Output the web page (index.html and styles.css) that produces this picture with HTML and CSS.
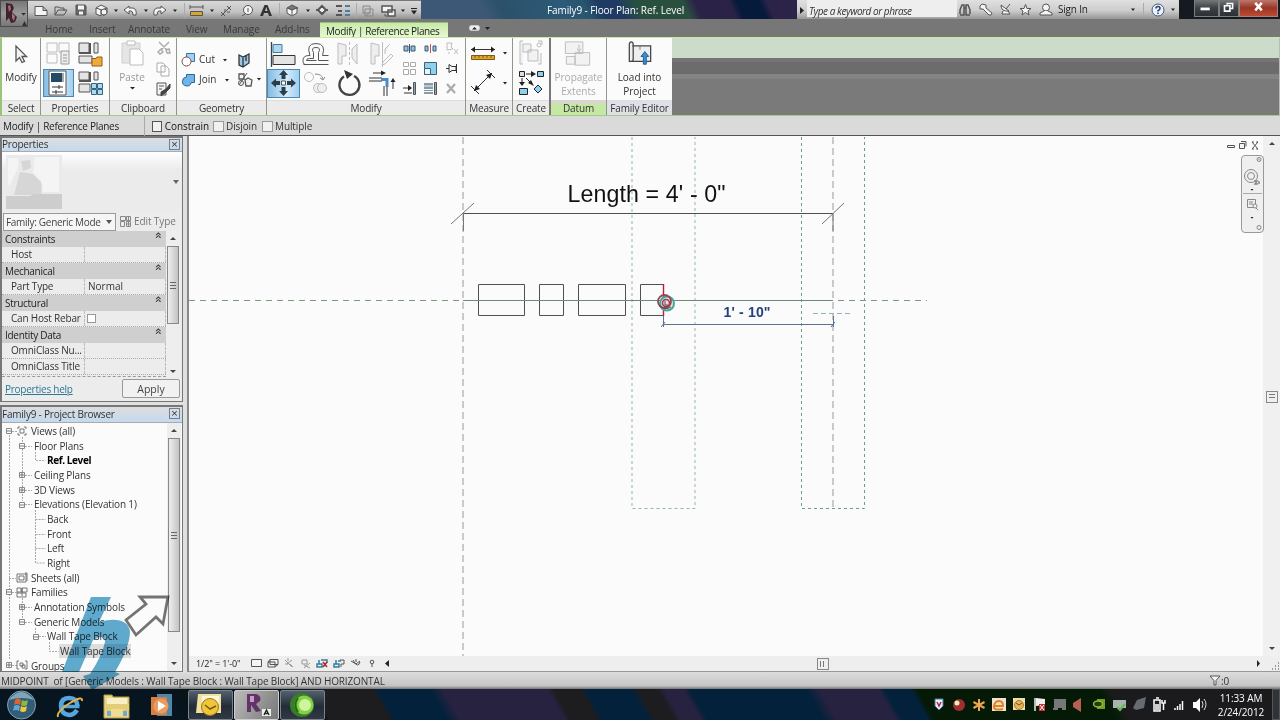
FILE: index.html
```html
<!DOCTYPE html>
<html lang="en">
<head>
    <meta charset="UTF-8">
    <title>Family9 - Floor Plan: Ref. Level</title>
    <link rel="stylesheet" href="styles.css">
</head>
<body>
<div class="top">
    <div class="app-btn">
        <svg width="27" height="27" viewBox="0 0 27 27">
            <path class="nl" fill="#40222a" d="M5 2l6 1 2 4-2 4 5 5-2 5-4 1-2-5-3 3z"/>
            <path class="nl" fill="#a3727f" d="M7 5l2-1 1 4-2 3zM11 12l3 3-1 5-2-3z"/>
            <path class="nl" fill="#333" d="M20 12h5l-2.500 2.500zM21 25l2.500-5 2.500 5z"/>
        </svg>
    </div>
    <div class="top-main">
        <div class="titlebar">
            <div class="qat">
                <svg width="393" height="19" viewBox="28 0 393 19">
                    <path class="w" d="M35 5.500h8l4 4v5H35zM43 5.500v4h4"/>
                    <path d="M55 14V6h4l1 1h4v3M55 14l3-5h9l-3 5z"/>
                    <path fill="#666" d="M76 4h9l1 1v9H76z"/><path class="w nl" d="M78 4.500h6v4h-6zM79 10.500h4v3h-4z"/>
                    <path class="w" d="M96 7l5-3 6 3-5 2zM96 7v6l5 2V9M107 7v5l-4 3"/><circle class="w" cx="104" cy="11" r="3"/>
                    <path class="dn nl" d="M114 8.500h4l-2 2.500zM144 8.500h4l-2 2.500zM173 8.500h4l-2 2.500zM210 8.500h4l-2 2.500zM306 8.500h4l-2 2.500zM401 8.500h4l-2 2.500zM411 7h6v1h-6zM411 9.500h6l-3 4z"/>
                    <path class="w" d="M124 9l5-4v2h4q4 1 3 7h-3q0-4-2-4h-2v3zM166 9l-5-4v2h-4q-4 1-3 7h3q0-4 2-4h2v3z"/>
                    <path class="lt" d="M184.500 2v15M279.500 2v15M356.500 2v15"/>
                    <path d="M190 6h13M190 4v4M203 4v4"/><path fill="#dba62e" d="M190.500 10.500h12v4h-12z"/>
                    <path d="M221 15l10-10M221 11l4 4M227 5l4 4M225 11v-3M227 11h3"/>
                    <circle class="w" cx="248" cy="9" r="4.500"/><path d="M242 15l3-2M248 7v4"/>
                    <path class="nl" fill="#333" d="M260 15l4.500-11h3l4.500 11h-3l-1-3h-4l-1 3zM265 10h2.500l-1.200-4z"/>
                    <path fill="#777" d="M287 7l5-3 6 3-5 2z"/><path class="w" d="M287 7l5 2 5-2v5l-5 3-5-3zM292 9v5"/>
                    <path class="w" stroke-width="2" d="M322 5l4 4-4 4-4-4zM316 9h2M326 9h2"/>
                    <path stroke-width="2" d="M336 5h6M338 10h4M336 14h6"/><path class="b" stroke-width="2" d="M345 5h5M345 10h5M345 14h5"/>
                    <path d="M363 5h7v7h-7zM365 8h8v7h-8zM366 15l5-5" stroke="#888"/>
                    <path class="w" stroke-width="1.500" d="M382 5h10v6h-10zM388 9h7v6h-7z"/><path d="M385 13v2h2"/>
                </svg>
            </div>
            <div class="caption"><span>Family9 - Floor Plan: Ref. Level</span></div>
            <div class="info">
                <svg width="10" height="19" viewBox="0 0 10 19"><path class="nl dn" d="M3 7l4 3.500-4 3.500z"/></svg>
                <div class="search">Type a keyword or phrase</div>
                <svg width="101" height="19" viewBox="957 0 101 19">
                    <path stroke-width="1.500" d="M960 14V10l2-5h2v10h-4M970 14v-4l-2-5h-2v10h4M964 8h2"/>
                    <path class="w" d="M980 6l2-2 4 1v3l6 5-1 2h-2l-6-6h-3z"/>
                    <path class="w" d="M1001 5q0 7 8 6zM1006 9l4-5M1003 11l-1 3h8l-2-3"/>
                    <path class="w" d="M1025.500 4.500l1.500 4h4l-3 2.500 1 4-3.500-2.500-3.500 2.500 1-4-3-2.500h4z"/>
                    <circle class="w" cx="1046" cy="7.500" r="3.500"/><path class="w" d="M1044 11l-4 2v2h12v-2l-4-2"/>
                </svg>
                <span class="sign">Sign In</span>
                <svg class="help" width="54" height="19" viewBox="1125 0 54 19">
                    <path class="lt" d="M1143.500 3v13"/>
                    <circle fill="#edf2f8" stroke="#415a80" cx="1158" cy="10" r="6"/><path stroke="#27466f" stroke-width="1.600" d="M1156 8.500q0-2 2-2t2 1.700q0 1.500-2 2.500v.7M1158 12.500v1.500"/>
                    <path class="nl dn" d="M1131 8.500h4l-2 2.500zM1171 8.500h4l-2 2.500z"/>
                </svg>
            </div>
            <div class="winbtns">
                <svg class="min" width="25" height="17" viewBox="0 0 25 17"><path stroke="#fff" stroke-width="3" d="M6 9.500h10"/></svg>
                <svg class="max" width="20" height="17" viewBox="0 0 20 17"><path stroke="#fff" stroke-width="1.800" d="M5 6h6v6H5zM8 5V3.500h6V9h-2"/></svg>
                <svg class="close" width="39" height="17" viewBox="0 0 39 17"><path stroke="#fff" stroke-width="2.600" d="M16 3l7 8M23 3l-7 8"/></svg>
            </div>
        </div>
        <div class="tabs">
            <span class="t1">Home</span><span class="t2">Insert</span><span class="t3">Annotate</span><span class="t4">View</span><span class="t5">Manage</span><span class="t6">Add-Ins</span>
            <span class="active">Modify | Reference Planes</span>
            <svg width="24" height="18" viewBox="0 0 24 18"><rect x=".5" y="6.500" width="10" height="5" rx="2" fill="#eee" stroke="#ccc"/><path class="nl dn" d="M3 10.500l2.500-2.500 2.500 2.500zM16 8h5l-2.500 3z"/></svg>
        </div>
    </div>
</div>

<div class="ribbon">
    <div class="panel select">
        <div class="tools">
            <svg width="38" height="32" viewBox="0 0 38 32"><path class="w" stroke-width="1.300" d="M14 8v15l3.500-3.500 2.500 5 2.500-1-2.500-5h4.500z"/></svg>
            <span>Modify</span>
        </div>
        <div class="name">Select</div>
    </div>
    <div class="panel props">
        <div class="tools grid2">
            <svg class="dis" width="31" height="28" viewBox="0 0 31 28"><path d="M4 3h10v9H4zM16 3h10v9H16zM4 14h10v9H4z"/><path fill="#eee" stroke="#999" d="M18 11h8v13h-8zM20 15h4M20 18h4M20 21h4"/></svg>
            <svg width="31" height="28" viewBox="0 0 31 28"><path fill="#e4e4e4" d="M5 3h10v10H5zM5 16h13v7H5zM20 3h4v10h-4z"/><path stroke-width="2" d="M16 3v10H5"/><path fill="#f0a93b" stroke="#936014" d="M18 18.500h4l1-1.500h5v9H18z"/></svg>
            <svg class="on" width="31" height="28" viewBox="0 0 31 28"><path fill="#fff" d="M6 2h17v24H6z"/><path class="nl" fill="#254a68" d="M8 4h11v9H8z"/><path fill="#999" d="M20 4v9"/><path stroke="#333" d="M9 18h11M9 23h11M16 16v4M13 21v4"/></svg>
            <svg width="31" height="28" viewBox="0 0 31 28"><path fill="#e4e4e4" d="M5 3h10v8H5zM5 15h11v8H5zM20 3h4v8h-4z"/><path stroke-width="2" d="M16 3v9H5"/><path fill="#a9dcf4" stroke="#39627c" d="M17.500 14.500h5v5h-5zM23.500 14.500h5v5h-5zM17.500 20.500h5v5h-5zM23.500 20.500h5v5h-5z"/></svg>
        </div>
        <div class="name">Properties</div>
    </div>
    <div class="panel clip">
        <div class="tools row">
            <div class="col paste">
                <svg class="dis" width="44" height="32" viewBox="0 0 44 32"><path fill="#ddd" d="M12 5h18v20H12z"/><path fill="#fff" d="M17 3h8v4h-8zM20 11h9l4 4v12H20z"/></svg>
                <span>Paste</span>
                <svg width="44" height="12" viewBox="0 0 44 12"><path class="dn nl" d="M20 3h5l-2.500 2.500z"/></svg>
            </div>
            <svg width="21" height="60" viewBox="0 0 21 60">
                <path class="lt" stroke-width="1.400" d="M5 4l8 8M15 4L7 12M4 14l3-3 2 3-3 2zM12 12l3-1 1 4h-3z"/>
                <path class="lt" fill="#fff" d="M3 25h6l2 2v7H3zM7 28h5l3 3v7H7z"/>
                <path class="w" d="M3 45h9v12H3zM5 48h5M5 51h3"/><path fill="#444" stroke="#444" d="M7 54l5-3 4-5v4l-5 5-4 3z"/>
            </svg>
        </div>
        <div class="name">Clipboard</div>
    </div>
    <div class="panel geo">
        <div class="tools">
            <svg width="17" height="16" viewBox="0 0 17 16"><path fill="#9fd0f5" stroke="#3d75a8" d="M5.500 1.500h8v8h-8z"/><circle fill="#fff" stroke="#844" cx="5.500" cy="9.500" r="4.500"/></svg>
            <span>Cut</span>
            <svg width="16" height="16" viewBox="0 0 16 16"><path class="dn nl" d="M2 7h4l-2 2.500z"/></svg>
            <svg width="32" height="18" viewBox="0 0 32 18"><path fill="#9cc8e8" stroke="#333" stroke-width="1.300" d="M2 4l4 2 6-3v9l-6 4-4-2zM6 6v10M9 5v5"/></svg>
            <svg width="17" height="16" viewBox="0 0 17 16"><path fill="#72b3e8" stroke="#2b6696" d="M5.500 2.500h8v8h-3.200a4.500 4.500 0 1 1-4.800-5.500z"/></svg>
            <span>Join</span>
            <svg width="16" height="16" viewBox="0 0 16 16"><path class="dn nl" d="M4 7h4l-2 2.500z"/></svg>
            <svg width="32" height="18" viewBox="0 0 32 18"><path class="w" stroke-width="1.300" d="M2 3h5v5H2zM8 9l3-2 4 2-1 6H9z"/><circle class="w" cx="4" cy="12" r="2.500"/><path d="M2 14l8-12"/><path class="dn nl" d="M20 7h4l-2 2.500z"/></svg>
        </div>
        <div class="name">Geometry</div>
    </div>
    <div class="panel modify">
        <div class="tools row">
            <div class="big">
                <svg width="33" height="29" viewBox="0 0 33 29"><path stroke="#345" stroke-width="1.300" d="M4.500 2v25"/><path fill="#a9dcf4" stroke="#4f7890" d="M6 4.500h9v8H6z"/><path fill="#e4e4e4" stroke="#333" d="M6 15.500h22v9H6z"/></svg>
                <svg width="33" height="29" viewBox="0 0 33 29"><path stroke="#555" d="M3.500 24.500h25M28.500 15.500h-6q4-12-6.500-12t-6 12h-1q-6 0-6 5t4 4M28.500 20.500h-10v-8q3-5-2.500-5t-2.500 5v6h-4q-3 0-3 2h10"/></svg>
                <svg class="dis" width="33" height="29" viewBox="0 0 33 29"><path fill="#eee" d="M5 3v21h4v-8h4V5zM24 4l-5 5v9l5 6z"/><path stroke-dasharray="3 2" d="M16.500 2v25"/></svg>
                <svg class="dis" width="33" height="29" viewBox="0 0 33 29"><path fill="#eee" d="M5 3v21h4v-8h4V5zM24 4l-5 5v5"/><path d="M16.500 2v25M17 22l8-8 2 2-8 8-3 1z"/></svg>
                <svg class="on" width="33" height="29" viewBox="0 0 33 29"><path class="nl" fill="#2c3e4c" d="M16.500 1l4.500 5h-2.500v4h-4V6H12zM16.500 27l-4.500-5h2.500v-4h4v4H21zM4 14l5-4.500V12h4v4H9v2.500zM29 14l-5-4.500V12h-4v4h4v2.500z"/><path fill="#fff" d="M14.500 12h4v4h-4z"/></svg>
                <svg class="dis" width="33" height="29" viewBox="0 0 33 29"><circle cx="9" cy="8" r="4.500"/><circle cx="18" cy="19" r="4.500" fill="#eee"/><circle cx="22" cy="19" r="4.500" fill="#eee"/><path stroke="#888" d="M15 5q7 0 8 5M20 9l3 2 2-3"/></svg>
                <svg width="33" height="29" viewBox="0 0 33 29"><path stroke="#444" stroke-width="2.400" d="M11 7.500a10 10 0 1 0 10-.5"/><path class="nl" fill="#333" d="M11 1l9 4-6 5z"/></svg>
                <svg width="33" height="29" viewBox="0 0 33 29"><path stroke="#333" d="M3 9h13M3 12h13M18 17v10M21 17v10M7 4h10M27 20v-8"/><path stroke="#4b8bc7" stroke-width="3" d="M15 10.500h6V18"/><path class="nl dn" d="M15 1.500l5 2.500-5 2.500zM24.500 13h5l-2.500-4z"/></svg>
            </div>
            <div class="small">
                <svg width="21" height="21" viewBox="0 0 21 21"><path fill="#8cc4e8" stroke="#456" d="M5 8h4v5H5zM12 8h4v5h-4z"/><path stroke="#456" d="M10.500 6v9"/></svg>
                <svg width="21" height="21" viewBox="0 0 21 21"><path fill="#8cc4e8" stroke="#456" d="M5 8h3v5H5zM13 8h3v5h-3z"/><path stroke="#b55" d="M10.500 6v9"/></svg>
                <svg width="21" height="21" viewBox="0 0 21 21" class="dis"><path d="M6 5h5l-1 4 2 2-6 1zM13 11l4 5M17 11l-4 5M8 14v2"/></svg>
                <svg width="21" height="21" viewBox="0 0 21 21"><path class="lt" fill="#fff" d="M4.500 4.500h5v4h-5zM11.500 4.500h5v4h-5zM4.500 11.500h5v5h-5zM11.500 11.500h5v5h-5z"/></svg>
                <svg width="21" height="21" viewBox="0 0 21 21"><path fill="#8ed0ef" stroke="#39627c" d="M4.500 4.500h12v12h-12z"/><path fill="#e8f4fa" stroke="#39627c" d="M4.500 10.500h6v6h-6z"/></svg>
                <svg width="21" height="21" viewBox="0 0 21 21"><path class="w" stroke="#333" d="M5 10.500h3M8 6.500v8l3-2h4v-4h-4zM15.500 6v9"/></svg>
                <svg width="21" height="21" viewBox="0 0 21 21"><path stroke="#333" d="M4 10h8M5 15h8"/><path class="nl dn" d="M9 7l4 3-4 3z"/><path fill="#84aac0" d="M14.500 4.500h2v12h-2z"/></svg>
                <svg width="21" height="21" viewBox="0 0 21 21"><path stroke="#333" d="M4 6h9M4 10h9M4 15h9"/><path stroke="#52a0c8" d="M4 8h9M4 12.500h9"/><path fill="#84aac0" d="M14.500 4.500h2v12h-2z"/></svg>
                <svg width="21" height="21" viewBox="0 0 21 21"><path stroke="#aaa" stroke-width="2.200" d="M6 6l8 9M14 6l-8 9"/></svg>
            </div>
        </div>
        <div class="name">Modify</div>
    </div>
    <div class="panel measure">
        <div class="tools">
            <svg width="46" height="30" viewBox="0 0 46 30"><path stroke="#333" d="M5 11.500h24"/><path class="nl dn" d="M5 11.500l4-3v6zM29 11.500l-4-3v6zM37 14h4l-2 2.500z"/><path fill="#e0a72c" stroke="#7b5b18" d="M5.500 17.500h23v4h-23z"/><path stroke="#7b5b18" d="M9 18v2M13 18v2M17 18v2M21 18v2M25 18v2"/></svg>
            <svg width="46" height="31" viewBox="0 0 46 31"><path stroke="#333" d="M8 23L26 5M5 18l8 8M21 2l8 8"/><path class="nl dn" d="M8 23l2-6 4 4zM26 5l-6 2 4 4zM37 14h4l-2 2.500z"/></svg>
        </div>
        <div class="name">Measure</div>
    </div>
    <div class="panel create">
        <div class="tools">
            <svg class="dis" width="37" height="30" viewBox="0 0 37 30"><path fill="#f2f2f2" d="M10 3H7v23h3M25 3h4v4M25 26h3V15M10 6h8v8h-8zM15 12h10v11H15z"/><circle cx="26" cy="7" r="2"/></svg>
            <svg width="37" height="30" viewBox="0 0 37 30"><path stroke="#222" d="M13 6h7M9 10v6M13 10l5 5"/><path class="nl dn" d="M18 3l5 3-5 3zM6 14h6l-3 4zM18 12l3 6-6-3z"/><path fill="#ddd" stroke="#222" d="M6.500 3.500h5v5h-5z"/><path fill="#8ed0ef" stroke="#222" d="M24.500 3.500h6v5h-6zM6.500 20.500h8v6h-8zM25 17l4 4-4 4-4-4z"/></svg>
        </div>
        <div class="name">Create</div>
    </div>
    <div class="panel datum">
        <div class="tools dim">
            <svg class="dis" width="54" height="34" viewBox="0 0 54 34"><path fill="#f2f2f2" d="M14 4h18v12H14zM15 19h9v8h-9zM24 15h15v13H24zM28 7v7M26 11l2 3 2-3"/></svg>
            <span>Propagate<br>Extents</span>
        </div>
        <div class="name">Datum</div>
    </div>
    <div class="panel editor">
        <div class="tools">
            <svg width="65" height="34" viewBox="0 0 65 34"><path fill="#eee" stroke="#444" stroke-width="1.300" d="M25 8h19v16H22V7q0-3 2-3t2 3v15q0 2-2 2"/><path stroke="#777" d="M33 8v4"/><path fill="#3b8ed4" stroke="#1e5f99" d="M38 14l4 5h-2.500v8h-3v-8H34z"/></svg>
            <span>Load into<br>Project</span>
        </div>
        <div class="name">Family Editor</div>
    </div>
    <div class="ribbon-rest"></div>
</div>

<div class="options">
    <span class="mode">Modify | Reference Planes</span>
    <label class="c1"><i></i>Constrain</label>
    <label class="c2"><i></i>Disjoin</label>
    <label class="c3"><i></i>Multiple</label>
</div>

<div class="work">
    <div class="side">
        <div class="palette properties">
            <div class="pal-title">Properties<b></b></div>
            <div class="preview">
                <svg width="56" height="54" viewBox="0 0 56 54"><path class="nl" fill="#eaeaea" d="M0 0h56v54H0z"/><path class="nl" fill="#d6d6d6" d="M15 6l9-1 1 8-8 3zM14 17l13 2 9 9-1 12H8z"/><path class="nl" fill="#cdcdcd" d="M0 41h24l4-2h28v15H0z"/><path class="nl" fill="#f4f4f4" d="M29 2h24v35H37l-2-11-8-8zM2 3h10v10L4 30H2z"/></svg>
                <svg width="8" height="8" viewBox="0 0 8 8"><path class="nl" fill="#666" d="M1 2h6L4 6z"/></svg>
            </div>
            <div class="family">
                <div class="combo"><span>Family: Generic Mode</span><svg width="8" height="8" viewBox="0 0 8 8"><path class="nl" fill="#555" d="M1 2h6L4 6z"/></svg></div>
                <svg width="12" height="11" viewBox="0 0 12 11"><path stroke="#888" d="M.5 3V.5h5v4h-5zM6.500.5h4v4h-4zM.5 5.500h4v5h-4zM6.500 5.500h4v5h-4zM8.500 0v10M6 8h5"/></svg>
                <span class="edit">Edit Type</span>
            </div>
            <div class="plist">
                <div class="rows">
                    <div class="head">Constraints<i>»</i></div>
                    <div class="prop"><span>Host</span><span></span></div>
                    <div class="head">Mechanical<i>»</i></div>
                    <div class="prop"><span>Part Type</span><span>Normal</span></div>
                    <div class="head">Structural<i>»</i></div>
                    <div class="prop"><span>Can Host Rebar</span><span><i class="chk"></i></span></div>
                    <div class="head">Identity Data<i>»</i></div>
                    <div class="prop"><span>OmniClass Nu...</span><span></span></div>
                    <div class="prop"><span>OmniClass Title</span><span></span></div>
                </div>
                <div class="scroll s1"><b class="up"></b><div class="thumb"></div><b class="down"></b></div>
            </div>
            <div class="pfoot"><a>Properties help</a><button>Apply</button></div>
        </div>
        <div class="palette browser">
            <div class="pal-title">Family9 - Project Browser<b></b></div>
            <div class="treebox">
                <div class="tree">
                    <svg class="lines" width="170" height="248" viewBox="2 423 170 248">
                        <path d="M9.500 435v225M12 431.500h5M12 592.500h5M12 665.500h5M9 578.500h7M22.500 437v64M25 446.500h7M25 475.500h7M25 490.500h7M25 504.500h7M35.500 452v8.500h10M35.500 510v53h10M35.500 519.500h10M35.500 534.500h10M35.500 548.500h10M22.500 598v20M25 607.500h7M25 622.500h7M39 636.500h7M35.500 628v5M49.500 642v9.500h9"/>
                        <g class="box"><path d="M6.500 428.500h5v5h-5zM19.500 443.500h5v5h-5zM19.500 472.500h5v5h-5zM19.500 487.500h5v5h-5zM19.500 502.500h5v5h-5zM6.500 589.500h5v5h-5zM19.500 604.500h5v5h-5zM19.500 619.500h5v5h-5zM33.500 634.500h5v5h-5zM6.500 662.500h5v5h-5z"/></g>
                        <path class="pm" d="M7 431h4M20 446h4M20 475h4M22 473v4M20 490h4M22 488v4M20 505h4M7 592h4M20 607h4M22 605v4M20 622h4M34 637h4M7 665h4M9 663v4"/>
                        <path class="ic" d="M20 427h-2v2M24 427h2v2M18 433v2h2M26 433v2h-2M20 429h4v4h-4zM17 574h9v8h-9zM19 576h5v4h-5zM25 573h2v8M17 588h4v4h-4zM22 588h5v4h-5zM17 593h9v4h-9zM22 588v8M19 661h-2v8h2M25 661h2v8h-2M20 663h3v3h-3zM22 665h3v3h-3z"/>
                    </svg>
                    <ul>
                        <li class="l1">Views (all)</li>
                        <li class="l2">Floor Plans</li>
                        <li class="l3 cur">Ref. Level</li>
                        <li class="l2">Ceiling Plans</li>
                        <li class="l2">3D Views</li>
                        <li class="l2">Elevations (Elevation 1)</li>
                        <li class="l3">Back</li>
                        <li class="l3">Front</li>
                        <li class="l3">Left</li>
                        <li class="l3">Right</li>
                        <li class="l1">Sheets (all)</li>
                        <li class="l1">Families</li>
                        <li class="l2">Annotation Symbols</li>
                        <li class="l2">Generic Models</li>
                        <li class="l3">Wall Tape Block</li>
                        <li class="l4"><span>Wall Tape Block</span></li>
                        <li class="l1">Groups</li>
                    </ul>
                </div>
                <div class="scroll s2"><b class="up"></b><div class="thumb"></div><b class="down"></b></div>
            </div>
        </div>
    </div>
    <div class="view">
        <div class="view-main">
            <svg class="drawing" width="1075" height="520" viewBox="188 136 1075 520">
                <g class="ref">
                    <path stroke-dasharray="7 4" d="M463 137v519M833 137v371"/>
                    <path class="teal" stroke-dasharray="3 3" d="M632 137v371.500h63V137"/>
                    <path class="teal dk" stroke-dasharray="3 3" d="M801.500 137v371.500h63V137"/>
                    <path class="green" stroke-dasharray="6 5" d="M189 300.500h275M838 300.500h89"/>
                    <path class="teal" stroke-dasharray="5 3" d="M813 313.500h39"/>
                </g>
                <path class="solid" d="M463 213.500h370"/>
                <path stroke="#777" d="M451 224l23-21M822 224l22-21"/>
                <path stroke="#777" d="M463.500 213v18M833 213v18"/>
                <path class="solid" d="M478.500 284.500h46v31h-46zM539.500 284.500h24v31h-24zM578.500 284.500h47v31h-47zM663 284.500h-22.500v31H663"/>
                <path stroke="#6a8a7c" d="M463 300.500h370"/>
                <path stroke="#c01a36" stroke-width="1.400" d="M663.500 284v32"/>
                <path stroke="#5c7290" d="M663.500 316v11M663 324.500h170M661 327l4-5M831 327l4-5M833.500 316v11"/>
                <circle cx="667" cy="303.500" r="7" fill="#e5e0df" stroke="#4aa59a" stroke-width="2"/>
                <circle cx="664.500" cy="301.500" r="6.500" stroke="#8f4a58" stroke-width="1.800"/>
                <circle cx="666" cy="303" r="3.500" stroke="#a8324a" stroke-width="1.500"/><path stroke="#555" d="M660 305q5 6 11 2M665 301v4h3"/>
                <text class="len" x="567.500" y="202" textLength="158">Length = 4' - 0"</text>
                <text class="dim" x="723.500" y="317" textLength="47">1' - 10"</text>
            </svg>
            <div class="mdi">
                <svg width="34" height="9" viewBox="0 0 34 9"><path class="w" d="M1.500 4.500h7v2h-7zM13.500 2.500h5v5h-5zM15 .5h5v5"/><path d="M26 1l6 7M32 1l-6 7M26 1h2M30 1h2M26 8h2M30 8h2"/></svg>
            </div>
            <div class="navbar">
                <svg width="23" height="77" viewBox="0 0 23 77"><circle cx="18" cy="4.500" r="2"/><path d="M17 3.500l2 2"/><circle cx="10" cy="21" r="6.500"/><circle cx="10" cy="21" r="3.500"/><path stroke-width="1.500" d="M13 26h3l-2 3h3M18 26v3"/><path class="nl dn" d="M9.500 34h3l-1.500 1.700zM9.500 62h3l-1.500 1.700z"/><path class="lt" d="M2 38.500h19"/><path d="M6.500 44.500h8v8h-8zM8 47h4M8 49h4"/><circle class="w" cx="14" cy="51" r="2"/><path d="M15 53l2 2"/><circle cx="18" cy="72.500" r="2"/></svg>
            </div>
            <div class="vscroll"><b class="up"></b><div class="grip"></div><b class="down"></b></div>
        </div>
        <div class="viewbar">
            <span>1/2" = 1'-0"</span>
            <svg width="145" height="15" viewBox="248 656 145 15">
                <path class="w" d="M251.500 659.500h10v7h-10z"/>
                <path d="M268 662h7v5h-7zM270 659.500h8v5h-8zM268 662l2-2.500M275 667l3-2.500"/>
                <path stroke="#999" d="M285 660l7 7M292 660l-5 4M288 658v3M285 664h3M302 660h5v4h-5zM304 665l6 3M310 663l-6 5M290 664l3 3"/>
                <path stroke="#367da0" stroke-width="1.500" d="M317 664h5v3h-5zM319 660v4M321 660h6v3M334 664h5v3h-5zM336 660v4M338 661h3"/><path stroke="#b22" stroke-width="1.500" d="M323 662l4 5M327 662l-4 5"/><path d="M340 660h4v4h-3v3"/>
                <path d="M351 661l5 3 4-3M353 660q5 9 7 2M356 659v3"/><circle cx="372" cy="662" r="1.800"/><path d="M372 664v3"/>
                <path class="nl dn" d="M389 660v7l-4-3.500z"/>
            </svg>
            <div class="hgrip"></div>
            <svg class="end" width="24" height="15" viewBox="0 0 24 15"><path class="nl dn" d="M1 4l3 3.500L1 11z"/><path stroke="#999" stroke-dasharray="2 1" d="M22.500 6v8M19.500 9v5M16.500 12v2"/></svg>
        </div>
    </div>
</div>

<div class="status">
    <span>MIDPOINT&nbsp; of [Generic Models : Wall Tape Block : Wall Tape Block] AND HORIZONTAL</span>
    <div class="filter"><svg width="12" height="11" viewBox="0 0 12 11"><path class="w" d="M1 1h10L7 5.500V10H5V5.500z"/></svg>:0</div>
</div>

<div class="taskbar">
    <svg class="apps" width="188" height="31" viewBox="0 689 188 31">
        <circle cx="21.500" cy="705" r="14" fill="#315d78" stroke="#87a0aa"/><path class="nl" fill="#7fa6b8" d="M9 700q12-16 25 0-12-4-25 0z"/>
        <path class="nl" fill="#e2622c" d="M15 700q3-3 6 0l-1 5q-3-2-6 0z"/><path class="nl" fill="#8dbb3b" d="M22 700q3 2 6 0l-1 5q-3 2-6 0z"/><path class="nl" fill="#5aa8dc" d="M14 706q3-2 6 0l-1 5q-3-2-6 0z"/><path class="nl" fill="#f3c63b" d="M21 706q3 2 6 0l-1 5q-3 2-6 0z"/>
        <path stroke="#55a6dd" stroke-width="4.500" d="M77 710q-3 5-8 5-8-1-8-9t8-8q8 0 8.500 8"/><path stroke="#55a6dd" stroke-width="3.500" d="M63 706.500h16.500"/><path stroke="#e3b345" stroke-width="2" d="M58 717q-2-5 12-14 13-8 12-2"/>
        <path fill="#e9d58b" stroke="#b79a45" d="M104 695h8l1 2h16v21h-25z"/><path class="nl" fill="#f8efc2" d="M107 698h20v6h-20z"/><path class="nl" fill="#e3cd79" d="M106 704h23v7h-23z"/><path class="nl" fill="#73a9ca" d="M107 711h20v5h-20z"/><path class="nl" fill="#f0dc92" d="M111 709h12v7h-12z"/>
        <path class="nl" fill="#4e87a8" d="M157 694h15v22h-15z"/><path class="nl" fill="#d88042" d="M151 697h16v18h-16z"/><circle class="nl" cx="161" cy="706" r="7.500" fill="#eb9b5d"/><path class="nl" fill="#fff" d="M158 701l8 5-8 5z"/>
    </svg>
    <div class="task"><svg width="43" height="29" viewBox="0 0 43 29"><path class="nl" fill="#f5dfa0" d="M9 3h23v19H7z"/><path class="nl" fill="#fff8df" d="M13 5h17v8H13z"/><circle cx="21" cy="16" r="8.500" fill="#f0c53a" stroke="#9c7918"/><path stroke="#755c14" stroke-width="1.500" d="M16 14l5 4 6-3"/></svg></div>
    <div class="task current"><svg width="43" height="29" viewBox="0 0 43 29"><path class="nl" fill="#613366" d="M12 3h9q6 2 4 7l-4 3 5 7-5 1-5-7v7h-4z"/><path class="nl" fill="#c79aca" d="M15 5h4v6h-4z"/><path class="nl" fill="#eee" d="M27 18h9v7h-9z"/><path stroke="#222" stroke-width="1.400" d="M29 24l2.500-5 2.500 5M30 22.500h3"/></svg></div>
    <div class="task"><svg width="43" height="29" viewBox="0 0 43 29"><circle class="nl" cx="21" cy="14" r="12" fill="#367f28"/><circle class="nl" cx="23" cy="14" r="9.500" fill="#88cf46"/><circle class="nl" cx="24" cy="14" r="6" fill="#cdf5a0"/><path stroke="#246919" stroke-width="2" d="M17 7q-5 7 0 14"/></svg></div>
    <div class="tray">
        <svg width="280" height="31" viewBox="930 689 280 31">
            <path fill="#e8eef8" stroke="#4777b4" d="M935 699h8v7l-4 4-4-4z"/><path stroke="#b22" stroke-width="1.500" d="M937 702l2 4 2-4"/>
            <circle class="nl" cx="959" cy="705" r="6" fill="#a32b32"/><circle class="nl" cx="957" cy="703" r="2.500" fill="#eeb"/>
            <path stroke="#eda84f" stroke-width="2" d="M979 699v12M973.500 702l11 6M984.500 702l-11 6"/>
            <path class="nl" fill="#f2e2d0" d="M992 698h14v13h-14z"/><path stroke="#df8421" stroke-width="2" d="M995 706h8q0-5-4-5t-5 5 9 3"/>
            <path class="nl" fill="#f1dfab" d="M1013 698h12v12h-12z"/><circle cx="1019" cy="705" r="4.500" fill="#e8b451" stroke="#a67a28"/><path d="M1016 703l3 2 3-2"/>
            <path stroke="#eee" stroke-width="1.500" d="M1035 698v13"/><path class="nl" fill="#eee" d="M1036 698l9 1v6l-9 1z"/><path class="nl" fill="#c33" d="M1039 704h6v7h-6z"/><path stroke="#fff" d="M1040 705l4 5M1044 705l-4 5"/>
            <path class="nl" fill="#777" d="M1054 699h12v9h-12zM1053 710h5v-2h-5zM1062 710h4v-2h-4z"/>
            <path class="nl" fill="#b75f53" d="M1073 703l8-5v14l-8-5z"/>
            <path class="nl" fill="#73a222" d="M1097 699h8v10h-8z"/><ellipse cx="1098" cy="704" rx="4.500" ry="3" fill="#263819" stroke="#8abc33" stroke-width="1.500"/>
            <path class="nl" fill="#a9b4ad" d="M1113 700h13v8h-13z"/><path stroke="#62ba55" stroke-width="2" d="M1117 707l3 3 5-6"/>
            <path class="nl" fill="#666a71" d="M1137 700l9-3-2 11-8 2-3-2z"/>
            <path stroke="#fff" stroke-width="1.500" d="M1154 700h6v11h-6zM1156 698h3M1162 700v3h3v-3M1163.500 703v7"/><path class="nl" fill="#ccc" d="M1155 704h4v6h-4z"/>
            <path stroke="#fff" stroke-width="1.500" d="M1175 708v2M1177.500 706v4M1180 704v6M1182.500 701v9"/>
            <path class="nl" fill="#fff" d="M1193 702h3l4-4v14l-4-4h-3z"/><path stroke="#ddd" d="M1202 701q2 3 0 7M1204 699q4 5 0 11"/>
        </svg>
        <div class="clock">11:33 AM<br>2/24/2012</div>
        <div class="peek"></div>
    </div>
</div>

<svg class="watermark" width="118" height="100" viewBox="58 590 118 100">
    <path class="nl" fill="#4fa3cb" d="M91 597h20l-12 25q27-7 31 9 0 16-15 41l5 2-28 16-9-14 7-2q12-18 15-32 0-9-12-2l-14 32H62z"/>
    <path fill="#fff" stroke="#666" stroke-width="2.800" d="M140 597h28l-5 27-7-7-20 18-10-15 20-16z"/>
</svg>
</body>
</html>
```
FILE: styles.css
```css
* {
    box-sizing: border-box;
}
body {
    margin: 0;
    width: 1280px;
    height: 720px;
    overflow: hidden;
    position: relative;
    font-family: "Open Sans", "Noto Sans", sans-serif;
    font-size: 10px;
    color: #333;
    background: #777;
    display: flex;
    flex-direction: column;
    white-space: nowrap;
}
svg {
    display: block;
    flex: none;
    fill: none;
    stroke: #555;
}
.nl { stroke: none; }
.w { fill: #f4f4f4; }
.dn { fill: #222; }
.lt { stroke: #aaa; }
.b { stroke: #4b7f9d; }
.dis { stroke: #bdbdbd; }
.dis path[fill="#ddd"] { opacity: .7; }
.on {
    background: linear-gradient(90deg, #7fb9e2, #d2ebf9 60%, #9bcdee);
    outline: 1px solid #4a87b7;
    outline-offset: -1px;
}

/* title bar and tabs */
.top {
    display: flex;
    height: 37px;
    flex: none;
    background: #777;
}
.app-btn {
    width: 28px;
    height: 27px;
    background: linear-gradient(#777, #999 50%, #777);
    border: 1px solid #4c4c4c;
}
.top-main { width: 1252px; }
.titlebar {
    display: flex;
    height: 19px;
    background: #151a20;
}
.qat {
    width: 393px;
    flex: none;
    background: linear-gradient(#d8d8d8, #c3c3c3 60%, #929292);
    border-top: 1px solid #777;
}
.caption {
    width: 376px;
    flex: none;
    color: #fff;
    font-size: 10px;
    line-height: 20px;
    background: linear-gradient(65deg, #3d5876 0 17%, #2c5169 22%, #2c5a78 38%, #28566f 44%, #1f3a63 48% 53%, #29503f 58% 70%, #2b2347 73% 82%, #061a3c 84% 90%, #2c2348 92%);
}
.caption span {
    display: block;
    margin-left: 126px;
    letter-spacing: -.1px;
}
.info {
    display: flex;
    width: 382px;
    flex: none;
    background: linear-gradient(#e0e0e0, #cdcdcd 55%, #969696);
}
.search {
    width: 150px;
    height: 18px;
    flex: none;
    background: #eee;
    border-bottom: 1px solid #aaa;
    font-style: italic;
    line-height: 22px;
    letter-spacing: -.45px;
    padding-left: 2px;
}
.sign {
    line-height: 19px;
    letter-spacing: -.2px;
    color: #222;
}
.help { margin-left: auto; }
.winbtns {
    flex: 1;
    display: flex;
    padding-left: 15px;
}
.min, .max {
    background: linear-gradient(#777, #3c4147 50%, #2c3035);
    border: 1px solid #7b7f82;
    border-top: 0;
}
.close {
    background: linear-gradient(#bc776b, #9a3626 50%, #bd4a32);
    border: 1px solid #ad8177;
    border-top: 0;
}
.tabs {
    height: 18px;
    display: grid;
    grid-template-columns: 17px 44px 39px 58px 37px 52px 45px 128px 21px 24px;
    line-height: 21px;
    letter-spacing: -.1px;
    color: #3a3a3a;
    background: #777;
}
.t1 { grid-column: 2; }
.tabs .active {
    grid-column: 8;
    margin-top: 3px;
    line-height: 16px;
    background: linear-gradient(#c8eaa9, #ecfbdc);
    color: #222;
    padding-left: 6px;
    letter-spacing: -.38px;
    border-top: 1px solid #99bd76;
}
.tabs svg { grid-column: 10; }

/* ribbon */
.ribbon {
    height: 79px;
    flex: none;
    display: flex;
    border-top: 1px solid #c9eaa5;
    border-bottom: 1px solid #a6c888;
    border-left: 2px solid #9cc37b;
    background: #777;
}
.panel {
    display: flex;
    flex-direction: column;
    background: #fbfbfb;
    border-right: 1px solid #8f978b;
}
.tools {
    height: 62px;
    text-align: center;
}
.tools span { line-height: 13.500px; }
.name {
    height: 15px;
    line-height: 15px;
    letter-spacing: -.15px;
    background: #ebebeb;
    border-top: 1px solid #ddd;
    text-align: center;
}
.row { display: flex; }
.select { width: 39px; }
.select .tools { letter-spacing: -.1px; }
.props { width: 69px; }
.grid2 {
    display: grid;
    grid-template-columns: 31px 33px;
    grid-template-rows: 29px 28px;
    padding: 2px 0 0 2px;
}
.clip { width: 67px; }
.paste { width: 44px; color: #999; }
.paste svg:last-child { margin-top: -1px; }
.geo { width: 90px; }
.geo .tools {
    display: grid;
    grid-template-columns: 17px 23px 16px 28px;
    grid-template-rows: 20px 20px;
    align-items: center;
    justify-items: start;
    padding: 12px 0 0 4px;
}
.geo span { margin-left: 1px; }
.modify { width: 199px; }
.modify .tools { padding-top: 2px; }
.big {
    display: grid;
    grid-template-columns: repeat(4, 33px);
    grid-template-rows: 29px 29px;
}
.small {
    display: grid;
    grid-template-columns: repeat(3, 21px);
    grid-template-rows: 20px 20px 20px;
    margin-top: -2px;
}
.measure { width: 47px; }
.create { width: 38px; border-right: 2px solid #777; }
.datum { width: 56px; }
.datum .name { background: #c5e8a4; border-top: 4px solid #d5d8ca; line-height: 9px; }
.dim { color: #aaa; }
.editor { width: 65px; border-right: 0; }
.editor .name { background: #dfdfe8; }
.datum .tools svg, .editor .tools svg { height: 33px; }
.datum span, .editor span { display: block; }
.ribbon-rest {
    flex: 1;
    border-right: 1px solid #bbb;
    background: linear-gradient(#cbdccb 0 20px, #757575 20px 24px, #6c6c6c 24px 36px, #828583 36px 41px, #7a7a7a 41px);
}

/* options bar */
.options {
    height: 20px;
    flex: none;
    display: grid;
    grid-template-columns: 145px 61px 49px 80px;
    padding-left: 3px;
    line-height: 21px;
    background: #dadada;
    border-bottom: 1px solid #555;
}
.mode {
    color: #222;
    border-right: 1px solid #aaa;
    margin-right: 3px;
    letter-spacing: -.28px;
}
.options label { display: flex; align-items: center; letter-spacing: -.1px; }
.options label i {
    width: 11px;
    height: 11px;
    margin: 0 2px 0 4px;
    border: 1px solid #999;
    background: #f1f1f1;
}
.options .c1 { color: #111; }
.options .c1 i { border-color: #555; margin-right: 3px; }

/* docked palettes */
.work {
    height: 536px;
    flex: none;
    display: flex;
}
.side {
    width: 189px;
    background: #e0e0e0;
    border-right: 2px solid #888;
}
.palette {
    width: 183px;
    background: #ececec;
    border: 1px solid #777;
    border-width: 2px 1px 1px 2px;
}
.properties { height: 266px; letter-spacing: -.1px; }
.browser { height: 267px; margin-top: 3px; }
.pal-title {
    height: 14px;
    display: flex;
    justify-content: space-between;
    line-height: 13px;
    letter-spacing: -.22px;
    background: linear-gradient(#ddd, #c3daef);
    border-bottom: 1px solid #aaa;
}
.browser .pal-title { height: 16px; line-height: 15px; }
.pal-title b {
    width: 11px;
    height: 11px;
    margin: 1px 2px;
    border: 1px solid #6f8190;
}
.pal-title b::after {
    content: "×";
    display: block;
    font: 9px/8px "DejaVu Sans", sans-serif;
    text-align: center;
}
.preview {
    height: 60px;
    display: flex;
    justify-content: space-between;
    align-items: center;
    padding: 0 2px 0 4px;
    background: linear-gradient(#fff, #ebebeb 30%);
}
.family {
    height: 19px;
    display: flex;
    align-items: center;
    color: #777;
}
.combo {
    width: 113px;
    height: 18px;
    display: flex;
    align-items: center;
    padding: 0 2px;
    margin: 0 4px 0 1px;
    border: 1px solid #999;
    background: #f6f6f6;
    color: #444;
}
.combo span {
    width: 99px;
    margin-right: 1px;
    letter-spacing: -.3px;
}
.edit { margin-left: 2px; position: relative; top: -1px; }
.plist { height: 146px; display: flex; }
.rows {
    width: 164px;
    border-bottom: 1px dashed #999;
}
.head {
    height: 16px;
    padding: 0 4px 0 3px;
    line-height: 16px;
    letter-spacing: -.3px;
    background: #cfcfcf;
    color: #222;
    display: flex;
    justify-content: space-between;
}
.head i {
    font: 12px/8px "DejaVu Sans", sans-serif;
    height: 8px;
    width: 8px;
    transform: rotate(-90deg);
}
.prop {
    height: 16px;
    display: grid;
    grid-template-columns: 82px 82px;
    line-height: 15px;
    border-bottom: 1px dotted #aaa;
}
.prop span { padding-left: 9px; letter-spacing: -.2px; }
.prop span + span {
    padding-left: 3px;
    letter-spacing: 0;
    border-left: 1px dashed #bbb;
    border-right: 1px dashed #bbb;
}
.chk {
    display: block;
    width: 9px;
    height: 9px;
    margin: 3px 0 0 -1px;
    border: 1px solid #999;
    background: #fff;
}
.scroll {
    flex: none;
    display: flex;
    flex-direction: column;
    align-items: center;
    width: 14px;
    background: #eee;
}
.up, .down {
    border: 3px solid transparent;
    border-top: 0;
    border-bottom: 3px solid #444;
}
.down { border-bottom: 0; border-top: 3px solid #444; margin-top: auto; }
.s1 .up, .s2 .up { margin: 6px 0; }
.s1 .down { margin-bottom: 4px; }
.thumb {
    width: 12px;
    border: 1px solid #888;
    background: linear-gradient(90deg, #eee, #c3c3c3);
    display: flex;
    align-items: center;
    justify-content: center;
}
.thumb::after {
    content: "";
    width: 6px;
    height: 7px;
    background: repeating-linear-gradient(#666 0 1px, transparent 1px 3px);
}
.s1 .thumb { height: 78px; }
.pfoot {
    display: flex;
    justify-content: space-between;
    align-items: center;
    height: 23px;
    padding: 0 2px 0 3px;
    letter-spacing: -.25px;
}
.pfoot a { color: #2d7897; text-decoration: underline; }
.pfoot button {
    width: 58px;
    height: 19px;
    padding: 0;
    font: inherit;
    font-size: 10.500px;
    color: #444;
    background: #f1f1f1;
    border: 1px solid #999;
    border-radius: 2px;
}
.treebox {
    display: flex;
    height: 248px;
    background: #fbfbfb;
}
.tree { width: 165px; position: relative; overflow: hidden; letter-spacing: -.16px; }
.lines { position: absolute; left: 0; top: 0; stroke: #aaa; stroke-dasharray: 2 1; }
.lines .box { stroke: #888; stroke-dasharray: none; fill: #fff; }
.lines .pm, .lines .ic { stroke: #555; stroke-dasharray: none; stroke-width: .8; }
.tree ul { margin: 0; padding: 1px 0 0; list-style: none; position: relative; }
.tree li { height: 14.670px; line-height: 15px; }
.l1 { padding-left: 29px; }
.l2 { padding-left: 32px; }
.l3 { padding-left: 45px; }
.l4 { padding-left: 57px; }
.l4 span { background: #ddd; padding: 0 1px; }
.cur { font-weight: bold; color: #000; letter-spacing: -.4px; }
.s2 .thumb { height: 194px; }
.s2 .down { margin-bottom: 6px; }

/* drawing view */
.view { width: 1091px; background: #fbfbfb; }
.view-main { display: flex; height: 520px; position: relative; }
.drawing { margin-left: -1px; }
.ref { stroke: #999; }
.ref .teal { stroke: #94b5b5; }
.ref .dk { stroke: #6d9994; }
.ref .green { stroke: #7a9b7c; }
.solid { stroke: #505050; }
.len {
    font: 23.200px "Liberation Sans", Arial, sans-serif;
    fill: #111;
    stroke: none;
}
.drawing .dim {
    font: bold 14px "Liberation Sans", Arial, sans-serif;
    fill: #24407e;
    stroke: none;
}
.mdi { position: absolute; left: 1037px; top: 5px; }
.navbar {
    position: absolute;
    left: 1052px;
    top: 19px;
    width: 23px;
    height: 78px;
    border: 1px solid #999;
    border-radius: 4px;
    background: #efefef;
}
.navbar svg { stroke: #888; margin: -1px; }
.vscroll {
    width: 17px;
    background: #f0f0f0;
    display: flex;
    flex-direction: column;
    align-items: center;
    padding: 6px 0;
}
.grip, .hgrip {
    width: 12px;
    height: 12px;
    border: 1px solid #888;
    background: repeating-linear-gradient(#777 0 1px, #eee 1px 3px) content-box;
    padding: 2px;
}
.grip { margin-top: 246px; }
.viewbar {
    height: 16px;
    display: flex;
    align-items: center;
    background: #eee;
    border-bottom: 1px solid #999;
}
.viewbar span {
    width: 52px;
    margin-left: 7px;
    font-size: 9px;
    letter-spacing: -.1px;
    color: #222;
}
.hgrip {
    margin-left: 424px;
    background: repeating-linear-gradient(90deg, #777 0 1px, #eee 1px 3px) content-box;
}
.end { margin-left: auto; }

/* status and task bars */
.status {
    height: 17px;
    flex: none;
    display: flex;
    justify-content: space-between;
    line-height: 18px;
    letter-spacing: -.14px;
    padding: 0 51px 0 1px;
    background: linear-gradient(#ddd, #c5c5c5 80%, #777);
}
.filter { display: flex; align-items: center; }
.taskbar {
    height: 31px;
    flex: none;
    display: flex;
    background: linear-gradient(60deg, #071520 0 14%, #08131a 15% 25%, #1d1d1f 25.500% 30%, #04213b 30.500% 34.500%, #26223f 35.500% 43.500%, #1d1d1f 44% 46%, #04213b 46.500% 50%, #1d1d1f 50.500% 52%, #26223f 52.500% 54%, #04213b 54.500% 63.500%, #26223f 64.500% 69%, #04213b 69.500% 71.500%, #041a06 72% 86%, #1b1b1d 87%);
}
.task {
    width: 45px;
    height: 30px;
    margin: 1px 1px 0 0;
    border: 1px solid #7d838a;
    border-radius: 2px;
    background: linear-gradient(#53606e, #222c38 55%, #303944);
}
.current { background: linear-gradient(120deg, #bbb, #777); border-color: #ccc; }
.tray { display: flex; margin-left: auto; color: #fff; }
.clock {
    width: 62px;
    padding-top: 2px;
    text-align: center;
    line-height: 14px;
    letter-spacing: -.1px;
}
.peek {
    width: 8px;
    background: #303438;
    border: 1px solid #555;
}
.watermark { position: absolute; left: 58px; top: 590px; opacity: .9; mix-blend-mode: multiply; }
```
